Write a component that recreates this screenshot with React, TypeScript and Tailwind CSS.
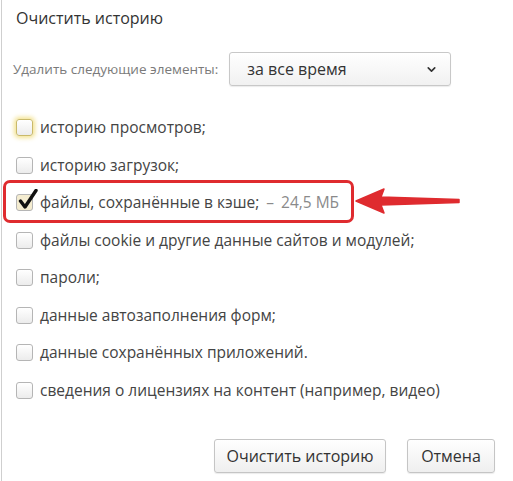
import { ChevronDown } from "lucide-react";

const items = [
  { label: "историю просмотров;", checked: false, focus: true },
  { label: "историю загрузок;", checked: false },
  { label: "файлы, сохранённые в кэше;", checked: true, size: "24,5 МБ" },
  { label: "файлы cookie и другие данные сайтов и модулей;", checked: false },
  { label: "пароли;", checked: false },
  { label: "данные автозаполнения форм;", checked: false },
  { label: "данные сохранённых приложений.", checked: false },
  { label: "сведения о лицензиях на контент (например, видео)", checked: false },
];

function Checkbox({ checked, focus }: { checked?: boolean; focus?: boolean }) {
  return (
    <span
      className={`relative w-[17px] h-[17px] shrink-0 rounded-[3px] border border-[#b5b5b5] ${
        checked ? "bg-[#f4ecd0]" : "bg-gradient-to-b from-white to-[#ececec]"
      } ${focus ? "shadow-[0_0_4px_2px_rgba(240,220,120,0.8)] border-[#c9b96a]" : ""}`}
    >
      {checked && (
        <svg className="absolute left-[1px] top-[-6px]" width="20" height="21" viewBox="0 0 20 21">
          <path d="M2.5 12 L7 18 L18 1.5" fill="none" stroke="#111" strokeWidth="3.4" strokeLinecap="round" strokeLinejoin="round" />
        </svg>
      )}
    </span>
  );
}

export default function App() {
  return (
    <div
      className="relative w-[513px] h-[481px] bg-white border-l border-[#cfcfcf] ml-[1px] overflow-hidden"
      style={{ fontFamily: '"Open Sans", "Noto Sans", sans-serif' }}
    >
      <div className="pl-[14px] pt-[6px] text-[16px] text-[#333] leading-[24px]">Очистить историю</div>

      <div className="flex items-center mt-[22px] pl-[11px]">
        <span className="text-[13.5px] text-[#7a7a7a]">Удалить следующие элементы:</span>
        <div className="ml-[11px] w-[222px] h-[34px] flex items-center justify-between pl-[17px] pr-[12px] rounded-[3px] border border-[#c8c8c8] bg-gradient-to-b from-white to-[#f1f1f1] shadow-[0_1px_1px_rgba(0,0,0,0.08)]">
          <span className="text-[16px] text-[#333]">за все время</span>
          <ChevronDown size={13} strokeWidth={3} color="#333" />
        </div>
      </div>

      <div className="mt-[23px]">
        {items.map((it, i) => (
          <div key={i} className="relative flex items-center h-[37.5px] pl-[14px] gap-[7px]">
            <Checkbox checked={it.checked} focus={it.focus} />
            <span className="text-[15.5px] text-[#444] whitespace-nowrap">{it.label}</span>
            {it.size && (
              <span className="text-[15.5px] text-[#8a8a8a] whitespace-nowrap">
                <span className="mr-[3px]">–</span> {it.size}
              </span>
            )}
            {it.checked && (
              <>
                <div className="absolute left-[1px] top-[-4px] w-[351px] h-[43px] border-[3.5px] border-[#df2b2f] rounded-[7px]" />
                <svg className="absolute left-[352px] top-[3px]" width="108" height="28" viewBox="0 0 108 28">
                  <path d="M2 14 L30 2 L27 10 L105 12.5 L105 15.5 L27 18 L30 26 Z" fill="#df2b2f" strokeLinejoin="round" stroke="#df2b2f" strokeWidth="1.5" />
                </svg>
              </>
            )}
          </div>
        ))}
      </div>

      <div className="flex justify-end gap-[21px] pr-[19px] mt-[30px]">
        <button className="w-[172px] h-[34px] rounded-[3px] border border-[#c5c5c5] bg-gradient-to-b from-white to-[#efefef] text-[16px] text-[#333] shadow-[0_1px_1px_rgba(0,0,0,0.08)]">
          Очистить историю
        </button>
        <button className="w-[88px] h-[34px] rounded-[3px] border border-[#c5c5c5] bg-gradient-to-b from-white to-[#efefef] text-[16px] text-[#333] shadow-[0_1px_1px_rgba(0,0,0,0.08)]">
          Отмена
        </button>
      </div>
    </div>
  );
}
